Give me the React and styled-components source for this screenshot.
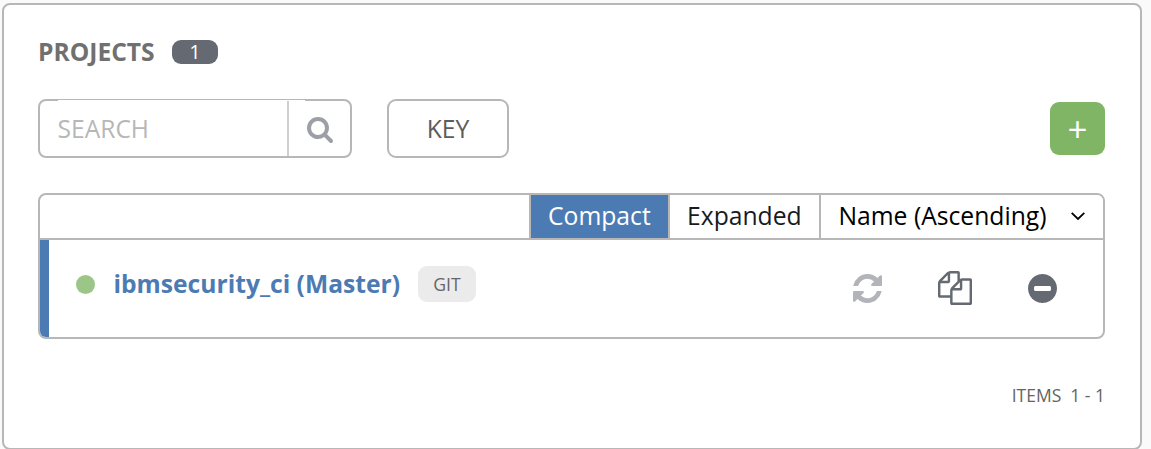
import React from "react";
import styled, { createGlobalStyle } from "styled-components";

const line = "#b7b7b7";
const blue = "#4c7bb4";

const GlobalStyle = createGlobalStyle`
  * { box-sizing: border-box; }
  body {
    margin: 0;
    background: #fafafa;
    overflow: hidden;
    font-family: "Open Sans", "Noto Sans", sans-serif;
    color: #707070;
  }
  button, input { font: inherit; }
`;

const Panel = styled.main`
  width: 1140px;
  height: 447px;
  margin: 3px 0 0 2px;
  padding: 35px 35px 0 34px;
  border: 2px solid ${line};
  border-radius: 8px;
  background: #fff;
`;

const Header = styled.header`
  display: flex;
  align-items: center;
  gap: 17px;
  height: 24px;
`;

const Title = styled.h1`
  margin: 0;
  width: 117px;
  font-size: 24.6px;
  line-height: 24px;
  font-weight: 700;
  white-space: nowrap;
`;

const Count = styled.span`
  width: 46px;
  height: 24px;
  border-radius: 9px;
  background: #646972;
  color: #fff;
  font-size: 20px;
  line-height: 24px;
  text-align: center;
`;

const Toolbar = styled.div`
  display: flex;
  align-items: center;
  height: 59px;
  margin-top: 35px;
`;

const SearchGroup = styled.div`
  position: relative;
  display: flex;
  width: 314px;
  height: 59px;
  margin-right: 35px;
  border: 2px solid ${line};
  border-radius: 8px;
  &::after {
    content: "";
    position: absolute;
    top: -1px;
    left: 18px;
    width: 247px;
    height: 1px;
    background: #fff;
  }
`;

const SearchInput = styled.input`
  width: 247px;
  padding: 0 0 0 17.5px;
  border: 0;
  outline: 0;
  background: transparent;
  font-size: 24.6px;
  color: #707070;
  &::placeholder { color: #b7b7b7; opacity: 1; }
`;

const SearchButton = styled.button`
  display: flex;
  flex: 1;
  align-items: center;
  justify-content: center;
  padding: 3px 0 0 0;
  border: 0;
  border-left: 2px solid #cfcfcf;
  background: transparent;
  color: #9c9fa5;
`;

const KeyButton = styled.button`
  width: 122px;
  height: 59px;
  padding: 0 0 1px;
  border: 2px solid ${line};
  border-radius: 9px;
  background: #fff;
  color: #5c5c5c;
  font-size: 24.7px;
`;

const AddButton = styled.button`
  width: 55px;
  height: 53px;
  margin-left: auto;
  padding: 0;
  border: 0;
  border-radius: 9px;
  background: #7fb565;
  color: #fff;
  font-size: 35px;
  line-height: 53px;
`;

const List = styled.section`
  height: 146px;
  margin-top: 35px;
  border: 2px solid ${line};
  border-radius: 8px;
  overflow: hidden;
`;

const ListBar = styled.div`
  display: flex;
  justify-content: flex-end;
  height: 45px;
  border-bottom: 2px solid ${line};
`;

const Segment = styled.button`
  display: flex;
  align-items: center;
  width: ${(p) => p.$width}px;
  padding: 0 0 2px 17px;
  border: 0;
  border-left: 2px solid ${line};
  background: ${(p) => (p.$active ? blue : "#fff")};
  color: ${(p) => (p.$active ? "#fff" : p.$color)};
  font-size: 24.7px;
  line-height: 34px;
  white-space: nowrap;
`;

const SortLabel = styled.span`
  width: 209px;
  margin-right: 24px;
`;

const Row = styled.article`
  display: flex;
  height: 97px;
  padding: 26px 46px 0 27px;
  border-left: 9px solid ${blue};
`;

const RowMain = styled.div`
  display: flex;
  align-items: center;
  height: 36px;
`;

const Status = styled.span`
  width: 19px;
  height: 19px;
  margin-right: 18.5px;
  border-radius: 50%;
  background: #9bc687;
`;

const Name = styled.a`
  width: 286.5px;
  margin-right: 18px;
  padding-bottom: 1px;
  color: ${blue};
  font-size: 24.65px;
  font-weight: 700;
  white-space: nowrap;
`;

const Tag = styled.span`
  width: 58px;
  height: 36px;
  border-radius: 9px;
  background: #ebebeb;
  color: #666;
  font-size: 17.7px;
  line-height: 37px;
  text-align: center;
`;

const Actions = styled.div`
  display: flex;
  align-items: center;
  height: 44px;
  margin-left: auto;
`;

const Action = styled.button`
  display: flex;
  margin: 0 0 0 ${(p) => p.$gap || 0}px;
  padding: 0;
  border: 0;
  background: transparent;
  color: ${(p) => (p.$muted ? "#b2b4b9" : "#646972")};
`;

const Footer = styled.footer`
  display: flex;
  justify-content: flex-end;
  gap: 9px;
  margin-top: 44px;
  color: #646464;
  font-size: 17.5px;
  line-height: 25px;
`;

const glyphs = {
  search: {
    box: "64 128 1664 1664",
    d: "M1216 832q0-185-131.5-316.5t-316.5-131.5-316.5 131.5-131.5 316.5 131.5 316.5 316.5 131.5 316.5-131.5 131.5-316.5zm512 832q0 52-38 90t-90 38q-54 0-90-38l-343-342q-179 124-399 124-143 0-273.5-55.5t-225-150-150-225-55.5-273.5 55.5-273.5 150-225 225-150 273.5-55.5 273.5 55.5 225 150 150 225 55.5 273.5q0 220-124 399l343 343q37 37 37 90z",
  },
  refresh: {
    box: "0 0 1536 1536",
    d: "M1511 928q0 5-1 7-64 268-268 434.5t-478 166.5q-146 0-282.5-55t-243.5-157l-129 129q-19 19-45 19t-45-19-19-45v-448q0-26 19-45t45-19h448q26 0 45 19t19 45-19 45l-137 137q71 66 161 102t187 36q134 0 250-65t186-179q11-17 53-117 8-23 30-23h192q13 0 22.5 9.5t9.5 22.5zm25-800v448q0 26-19 45t-45 19h-448q-26 0-45-19t-19-45 19-45l138-138q-148-137-349-137-134 0-250 65t-186 179q-11 17-53 117-8 23-30 23h-199q-13 0-22.5-9.5t-9.5-22.5v-7q65-268 270-434.5t480-166.5q146 0 284 55.5t245 156.5l130-129q19-19 45-19t45 19 19 45z",
  },
  copy: {
    box: "0 0 1792 1792",
    d: "M1696 384q40 0 68 28t28 68v1216q0 40-28 68t-68 28h-960q-40 0-68-28t-28-68v-288h-544q-40 0-68-28t-28-68v-672q0-40 20-88t48-76l408-408q28-28 76-48t88-20h416q40 0 68 28t28 68v328q68-40 128-40h416zm-544 213l-299 299h299v-299zm-640-384l-299 299h299v-299zm196 647l316-316v-416h-384v416q0 40-28 68t-68 28h-416v640h512v-256q0-40 20-88t48-76zm956 804v-1152h-384v416q0 40-28 68t-68 28h-416v640h896z",
  },
  remove: {
    box: "128 128 1536 1536",
    d: "M1344 960v-128q0-26-19-45t-45-19h-768q-26 0-45 19t-19 45v128q0 26 19 45t45 19h768q26 0 45-19t19-45zm320-64q0 209-103 385.5t-279.5 279.5-385.5 103-385.5-103-279.5-279.5-103-385.5 103-385.5 279.5-279.5 385.5-103 385.5 103 279.5 279.5 103 385.5z",
  },
};

function Glyph({ name, size }) {
  return (
    <svg width={size} height={size} viewBox={glyphs[name].box} fill="currentColor" aria-hidden="true">
      <path d={glyphs[name].d} />
    </svg>
  );
}

export default function App() {
  return (
    <>
      <GlobalStyle />
      <Panel>
        <Header>
          <Title>PROJECTS</Title>
          <Count>1</Count>
        </Header>
        <Toolbar>
          <SearchGroup>
            <SearchInput placeholder="SEARCH" />
            <SearchButton aria-label="Search">
              <Glyph name="search" size={26} />
            </SearchButton>
          </SearchGroup>
          <KeyButton>KEY</KeyButton>
          <AddButton>+</AddButton>
        </Toolbar>
        <List>
          <ListBar>
            <Segment $width={139} $active>Compact</Segment>
            <Segment $width={151} $color="#161b1f">Expanded</Segment>
            <Segment $width={284} $color="#000">
              <SortLabel>Name (Ascending)</SortLabel>
              <svg width="14" height="8" viewBox="0 0 14 8" fill="none" stroke="#000" strokeWidth="1.8" aria-hidden="true">
                <path d="M.7.8 7 7 13.3.8" />
              </svg>
            </Segment>
          </ListBar>
          <Row>
            <RowMain>
              <Status />
              <Name>ibmsecurity_ci (Master)</Name>
              <Tag>GIT</Tag>
            </RowMain>
            <Actions>
              <Action $muted aria-label="Update"><Glyph name="refresh" size={29} /></Action>
              <Action $gap={56} aria-label="Copy"><Glyph name="copy" size={34} /></Action>
              <Action $gap={56} aria-label="Delete"><Glyph name="remove" size={29} /></Action>
            </Actions>
          </Row>
        </List>
        <Footer>
          <span>ITEMS</span>
          <span>1 - 1</span>
        </Footer>
      </Panel>
    </>
  );
}
